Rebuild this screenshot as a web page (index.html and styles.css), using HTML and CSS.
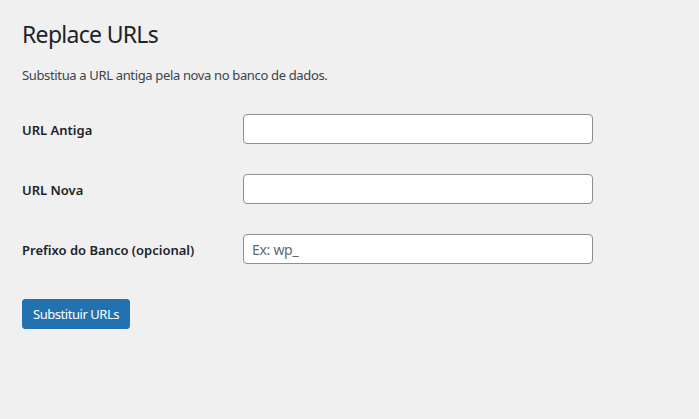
FILE: index.html
```html
<!DOCTYPE html>
<html lang="pt">
<head>
<meta charset="utf-8">
<title>Replace URLs</title>
<link rel="stylesheet" href="styles.css">
</head>
<body>
<div class="wrap">
  <h1 class="title">Replace URLs</h1>
  <p class="desc">Substitua a URL antiga pela nova no banco de dados.</p>
  <form class="form">
    <div class="row">
      <label class="label" for="old">URL Antiga</label>
      <div class="field"><input class="text" id="old" type="text"></div>
    </div>
    <div class="row">
      <label class="label" for="new">URL Nova</label>
      <div class="field"><input class="text" id="new" type="text"></div>
    </div>
    <div class="row">
      <label class="label" for="prefix">Prefixo do Banco (opcional)</label>
      <div class="field"><input class="text" id="prefix" type="text" placeholder="Ex: wp_"></div>
    </div>
    <div class="submit">
      <button class="button" type="button">Substituir URLs</button>
    </div>
  </form>
</div>
</body>
</html>
```

FILE: styles.css
```css
html, body {
  margin: 0;
  padding: 0;
  background: #f0f0f1;
}
body {
  font-family: "Noto Sans", "Open Sans", sans-serif;
  font-size: 13px;
  line-height: 1.4;
  color: #3c434a;
}
.wrap {
  padding: 10px 20px 0 22px;
}
.title {
  margin: 0;
  padding: 10px 0 3px;
  font-size: 23px;
  font-weight: 400;
  line-height: 1.3;
  letter-spacing: -0.7px;
  color: #1d2327;
}
.desc {
  margin: 13px 0 0;
  line-height: 1.5;
  letter-spacing: -0.35px;
}
.form {
  margin-top: 14px;
}
.row {
  display: grid;
  grid-template-columns: 210px 1fr;
  align-items: center;
  padding: 15px 0;
}
.label {
  font-weight: 600;
  color: #1d2327;
  line-height: 1.3;
  padding-top: 2px;
}
.field {
  padding-left: 11px;
}
.text {
  box-sizing: border-box;
  width: 350px;
  height: 30px;
  margin: 0;
  padding: 0 8px;
  border: 1px solid #8c8f94;
  border-radius: 4px;
  background: #fff;
  font-family: inherit;
  font-size: 14px;
  letter-spacing: -0.3px;
  color: #2c3338;
  display: block;
}
.text::placeholder {
  color: #646970;
}
.submit {
  margin-top: 20px;
}
.button {
  box-sizing: border-box;
  height: 30px;
  padding: 0 10px;
  border: 1px solid #2271b1;
  border-radius: 3px;
  background: #2271b1;
  color: #fff;
  font-family: inherit;
  font-size: 13px;
  letter-spacing: -0.45px;
  line-height: 28px;
}
```
